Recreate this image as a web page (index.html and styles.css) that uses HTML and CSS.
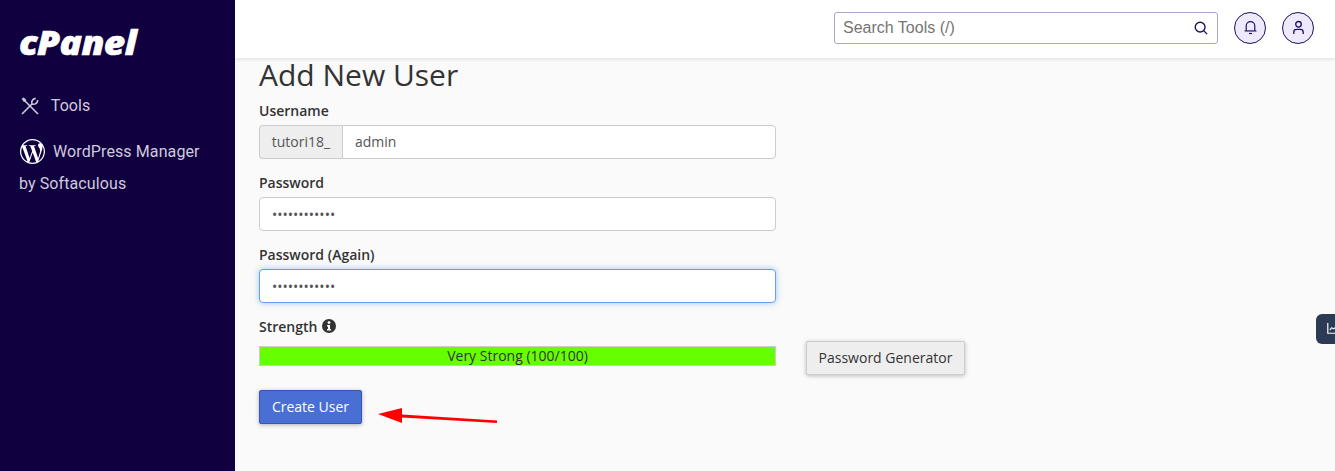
FILE: index.html
```html
<!DOCTYPE html>
<html lang="en">
<head>
    <meta charset="UTF-8">
    <title>Add New User</title>
    <link rel="stylesheet" href="styles.css">
</head>
<body>
    <div class="page">
        <aside class="sidebar">
            <div class="logo">cPanel</div>
            <nav class="side-nav">
                <a class="side-link tools-link">
                    <svg class="tools-icon" viewBox="0 0 18 18" fill="none" stroke="currentColor" stroke-width="1.6">
                        <path d="M1 2 L2.4 .8 L4.8 2.6 L4.6 4.6 L2.8 4.6 Z" fill="currentColor" stroke-width=".6"/>
                        <path d="M4 4 L17 17"/>
                        <path d="M1 17 L11 7"/>
                        <path d="M11 7 C10 4.4 11.6 2 14.6 1.4"/>
                        <path d="M11 7 C13.8 8 16.4 6.2 16.8 3.2"/>
                    </svg>
                    Tools
                </a>
                <a class="side-link wp-link">
                    <svg class="wp-icon" viewBox="0 0 24 24" fill="#fff">
                        <path d="M21.469 6.825c.84 1.537 1.318 3.3 1.318 5.175 0 3.979-2.156 7.456-5.363 9.325l3.295-9.527c.615-1.54.82-2.771.82-3.864 0-.405-.026-.78-.07-1.11m-7.981.105c.647-.03 1.232-.105 1.232-.105.582-.075.514-.93-.067-.899 0 0-1.755.135-2.88.135-1.064 0-2.85-.15-2.85-.15-.585-.03-.661.855-.075.885 0 0 .54.061 1.125.09l1.68 4.605-2.37 7.08L5.354 6.9c.649-.03 1.234-.1 1.234-.1.585-.075.516-.93-.065-.896 0 0-1.746.138-2.874.138-.2 0-.438-.008-.69-.015C4.911 3.15 8.235 1.215 12 1.215c2.809 0 5.365 1.072 7.286 2.833-.046-.003-.091-.009-.141-.009-1.06 0-1.812.923-1.812 1.914 0 .89.513 1.643 1.06 2.531.411.72.89 1.643.89 2.977 0 .915-.354 1.994-.821 3.479l-1.075 3.585-3.9-11.61.001.014zM12 22.784c-1.059 0-2.081-.153-3.048-.437l3.237-9.406 3.315 9.087c.024.053.05.101.078.149-1.12.393-2.325.609-3.582.609M1.211 12c0-1.564.336-3.05.935-4.39L7.29 21.709C3.694 19.96 1.212 16.271 1.211 12M12 0C5.385 0 0 5.385 0 12s5.385 12 12 12 12-5.385 12-12S18.615 0 12 0"/>
                    </svg>
                    WordPress Manager by Softaculous
                </a>
            </nav>
        </aside>

        <div class="main">
            <header class="topbar">
                <div class="search-box">
                    <input class="search-input" placeholder="Search Tools (/)">
                    <svg class="search-icon" viewBox="0 0 16 16" fill="none" stroke="#1f0f5c" stroke-width="1.6">
                        <circle cx="7" cy="7" r="5.6"/>
                        <path d="M11 11 L15 15"/>
                    </svg>
                </div>
                <button class="round-btn">
                    <svg viewBox="0 0 14 14" fill="none" stroke="#1f0f5c" stroke-width="1.1">
                        <path d="M3 10 V5.5 a4 4 0 0 1 8 0 V10"/>
                        <path d="M1.5 10.2 H12.5"/>
                        <path d="M5.6 12.6 H8.4"/>
                    </svg>
                </button>
                <button class="round-btn">
                    <svg viewBox="0 0 14 14" fill="none" stroke="#1f0f5c" stroke-width="1.2">
                        <circle cx="7" cy="4" r="2.6"/>
                        <path d="M2.6 13 V11.4 a2.6 2.6 0 0 1 2.6 -2.6 H8.8 a2.6 2.6 0 0 1 2.6 2.6 V13"/>
                    </svg>
                </button>
            </header>

            <main class="content">
                <h1 class="title">Add New User</h1>
                <form class="user-form">
                    <div class="field">
                        <label class="field-label">Username</label>
                        <div class="input-group">
                            <span class="input-prefix">tutori18_</span>
                            <input class="text-input grouped" type="text" value="admin">
                        </div>
                    </div>
                    <div class="field">
                        <label class="field-label">Password</label>
                        <input class="text-input" type="password" value="abcdefghijkl">
                    </div>
                    <div class="field">
                        <label class="field-label">Password (Again)</label>
                        <input class="text-input focused" type="password" value="abcdefghijkl">
                    </div>
                    <div class="strength-label">
                        Strength
                        <svg class="info-icon" viewBox="0 0 14 14">
                            <circle cx="7" cy="7" r="7" fill="#333"/>
                            <circle cx="7" cy="3.6" r="1.4" fill="#fff"/>
                            <path d="M5 6 H8 V10 H9 V11.4 H5 V10 H6 V7.4 H5 Z" fill="#fff"/>
                        </svg>
                    </div>
                    <div class="strength-row">
                        <div class="strength-bar">Very Strong (100/100)</div>
                        <button type="button" class="btn-generator">Password Generator</button>
                    </div>
                    <button type="button" class="btn-create">Create User</button>
                </form>
            </main>
        </div>
    </div>

    <!-- красная стрелка поверх скриншота -->
    <svg class="arrow" viewBox="0 0 119 20" fill="#fe0000">
        <path d="M0 9 L24 3 L24 9.6 L119 15.6 L119 18 L24 12.6 L24 18 Z"/>
    </svg>

    <div class="side-tab">
        <svg viewBox="0 0 14 14" fill="none" stroke="#fff" stroke-width="1.5">
            <path d="M1 0 V13 H14"/>
            <path d="M3.5 9 L6 6 L8.5 7.5 L14 3"/>
        </svg>
    </div>
</body>
</html>
```

FILE: styles.css
```css
* {
    box-sizing: border-box;
}

html, body {
    height: 100%;
}

body {
    margin: 0;
    font-family: "Open Sans", sans-serif;
    font-size: 14px;
    color: #333;
    background-color: #fafafa;
    overflow: hidden;
}

.page {
    display: flex;
    height: 471px;
}

/* sidebar */
.sidebar {
    width: 235px;
    flex-shrink: 0;
    padding: 24px 19px 0;
    background-color: #11003f;
    font-family: Roboto, sans-serif;
    font-size: 16px;
    letter-spacing: 0.1px;
    color: #cfcbdc;
}

.logo {
    height: 38px;
    font-family: "Open Sans", sans-serif;
    font-size: 33px;
    line-height: 38px;
    font-weight: 800;
    font-style: italic;
    letter-spacing: -0.5px;
    color: #fff;
    -webkit-text-stroke: 0.6px #fff;
    transform: scaleX(1.12);
    transform-origin: left center;
}

.side-nav {
    margin-top: 28px;
}

.side-link {
    display: block;
    line-height: 32px;
}

.tools-link {
    margin-bottom: 14px;
}

.tools-icon {
    width: 18px;
    height: 18px;
    margin: 0 8px 0 2px;
    vertical-align: -4px;
}

.wp-icon {
    width: 25px;
    height: 25px;
    margin-left: 1px;
    margin-right: 4px;
    vertical-align: -7px;
}

/* top bar */
.main {
    flex: 1;
    min-width: 0;
}

.topbar {
    display: flex;
    align-items: center;
    justify-content: flex-end;
    height: 58px;
    padding: 0 21px 3px 0;
    background-color: #fff;
    box-shadow: 0 1px 4px rgba(0, 0, 0, 0.12);
    position: relative;
}

.search-box {
    display: flex;
    align-items: center;
    width: 384px;
    height: 32px;
    padding: 0 9px 0 8px;
    border: 1px solid #aaa5cc;
    border-radius: 3px;
    background-color: #fff;
}

.search-input {
    flex: 1;
    min-width: 0;
    border: none;
    outline: none;
    padding: 0;
    font-family: "Liberation Sans", sans-serif;
    font-size: 16px;
    background: transparent;
}

.search-input::placeholder {
    color: #757575;
}

.search-icon {
    width: 14px;
    height: 14px;
}

.round-btn {
    display: flex;
    align-items: center;
    justify-content: center;
    width: 32px;
    height: 32px;
    margin-left: 16px;
    padding: 0;
    border: 1px solid #1f0f5c;
    border-radius: 50%;
    background-color: #efe9fd;
}

.round-btn svg {
    width: 15px;
    height: 15px;
}

/* content */
.content {
    padding: 0 24px;
}

.title {
    margin: 0;
    height: 34px;
    font-size: 30px;
    line-height: 34px;
    font-weight: 400;
}

.user-form {
    width: 517px;
    padding-top: 9px;
}

.field {
    margin-bottom: 14px;
}

.field-label {
    display: block;
    height: 24px;
    line-height: 19px;
    font-weight: 600;
}

.input-group {
    display: flex;
}

.input-prefix {
    width: 83px;
    flex-shrink: 0;
    height: 34px;
    line-height: 32px;
    text-align: center;
    color: #555;
    background-color: #eee;
    border: 1px solid #ccc;
    border-right: none;
    border-radius: 4px 0 0 4px;
}

.text-input {
    display: block;
    width: 100%;
    height: 34px;
    padding: 0 12px;
    font-family: "Open Sans", sans-serif;
    font-size: 14px;
    color: #555;
    background-color: #fff;
    border: 1px solid #ccc;
    border-radius: 4px;
    outline: none;
}

.text-input.grouped {
    padding-bottom: 2px;
    border-radius: 0 4px 4px 0;
}

.text-input.focused {
    border-color: #66a0f0;
    box-shadow: 0 0 6px rgba(102, 160, 240, 0.6);
}

.strength-label {
    height: 24px;
    line-height: 19px;
    font-weight: 600;
}

.info-icon {
    width: 14px;
    height: 14px;
    vertical-align: -1px;
    margin-left: 1px;
}

.strength-row {
    display: flex;
    align-items: flex-start;
    gap: 30px;
    width: 706px;
}

.strength-bar {
    flex: 0 0 517px;
    height: 20px;
    margin-top: 5px;
    line-height: 18px;
    text-align: center;
    background-color: #66ff00;
    border: 1px solid #ccc;
}

.btn-generator {
    flex: 0 0 159px;
    height: 34px;
    padding: 0 0 2px;
    font-family: "Open Sans", sans-serif;
    font-size: 14px;
    color: #333;
    background-color: #eee;
    border: 1px solid #ccc;
    border-radius: 2px;
    box-shadow: 0 1px 4px rgba(0, 0, 0, 0.25);
}

.btn-create {
    display: block;
    width: 103px;
    height: 34px;
    margin-top: 15px;
    padding: 0 0 2px;
    font-family: "Open Sans", sans-serif;
    font-size: 14px;
    color: #fff;
    background-color: #4a6fd4;
    border: 1px solid #3558b8;
    border-radius: 2px;
    box-shadow: 0 1px 4px rgba(0, 0, 0, 0.3);
}

/* things lying over the page */
.arrow {
    position: absolute;
    left: 378px;
    top: 405px;
    width: 119px;
    height: 20px;
}

.side-tab {
    position: absolute;
    right: 0;
    top: 314px;
    width: 19px;
    height: 30px;
    padding: 9px 0 0 11px;
    background-color: #2b3b55;
    border-radius: 6px 0 0 6px;
    overflow: hidden;
}

.side-tab svg {
    display: block;
    width: 11px;
    height: 11px;
}
```
